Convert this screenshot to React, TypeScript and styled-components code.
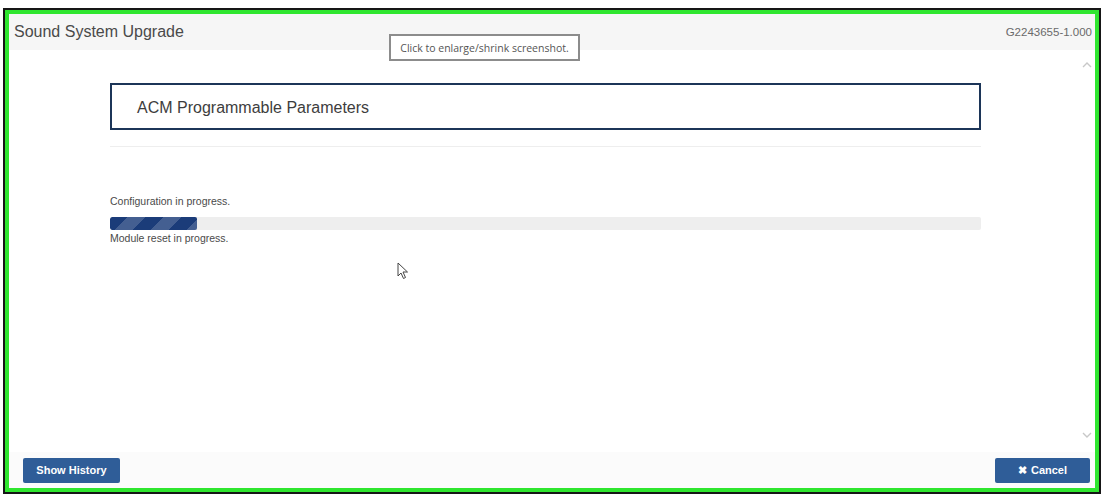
import styled, { createGlobalStyle } from "styled-components";

const GlobalStyle = createGlobalStyle`
  html, body {
    margin: 0;
    padding: 0;
    background: #ffffff;
  }
  body {
    font-family: "Liberation Sans", Arial, sans-serif;
  }
`;

const Page = styled.div`
  width: 1105px;
  height: 498px;
  padding: 8px 0 0 3px;
  box-sizing: border-box;
`;

const Frame = styled.div`
  width: 1098px;
  height: 486px;
  box-sizing: border-box;
  border: 2px solid #161616;
`;

const Screen = styled.div`
  position: relative;
  height: 100%;
  box-sizing: border-box;
  border: 4px solid #2fe62f;
  display: flex;
  flex-direction: column;
  background: #ffffff;
`;

const TopBar = styled.header`
  height: 36px;
  flex: none;
  display: flex;
  align-items: center;
  justify-content: space-between;
  padding: 0 3px 0 5px;
  background: #f6f6f6;
`;

const AppTitle = styled.h1`
  margin: 0;
  font-size: 16px;
  font-weight: normal;
  color: #4a4a4a;
`;

const Version = styled.span`
  font-size: 11.5px;
  color: #6a6a6a;
`;

const Body = styled.main`
  flex: 1;
  display: flex;
  min-height: 0;
`;

const Content = styled.section`
  flex: 1;
  padding: 33px 0 0 101px;
`;

const Wizard = styled.div`
  width: 871px;
`;

const StepHeader = styled.div`
  height: 47px;
  box-sizing: border-box;
  border: 2px solid #1c3558;
  display: flex;
  align-items: center;
  padding: 3px 0 0 25px;
  font-size: 16px;
  color: #3d3d3d;
`;

const Divider = styled.hr`
  margin: 16px 0 0;
  border: 0;
  border-top: 1px solid #eeeeee;
`;

const Status = styled.p<{ $top?: number }>`
  margin: ${(p) => p.$top ?? 0}px 0 0;
  font-size: 10.5px;
  line-height: 14px;
  color: #4a4a4a;
`;

const Track = styled.div`
  margin-top: 9px;
  height: 13px;
  background: #eeeeee;
  border-radius: 2px;
  overflow: hidden;
`;

const Fill = styled.div`
  height: 100%;
  border-radius: 2px;
  background-color: #1b3c79;
  background-image: linear-gradient(
    -45deg,
    rgba(255, 255, 255, 0.18) 25%,
    transparent 25%,
    transparent 50%,
    rgba(255, 255, 255, 0.18) 50%,
    rgba(255, 255, 255, 0.18) 75%,
    transparent 75%,
    transparent
  );
  background-size: 36px 36px;
`;

const ScrollRail = styled.div`
  width: 16px;
  flex: none;
  display: flex;
  flex-direction: column;
  justify-content: space-between;
  align-items: center;
  padding: 12px 0 14px;
  color: #c8c8c8;
`;

const Footer = styled.footer`
  height: 36px;
  flex: none;
  display: flex;
  align-items: center;
  justify-content: space-between;
  padding: 0 5px 0 14px;
  background: #fbfbfb;
`;

const Button = styled.button<{ $width: number }>`
  width: ${(p) => p.$width}px;
  height: 25px;
  border: 0;
  border-radius: 2px;
  background: #2f5d98;
  color: #ffffff;
  font-family: "Liberation Sans", Arial, sans-serif;
  font-size: 11px;
  font-weight: bold;
  display: flex;
  align-items: center;
  justify-content: center;
  gap: 4px;
  cursor: pointer;
`;

const Tooltip = styled.div`
  position: absolute;
  left: 380px;
  top: 20px;
  width: 191px;
  height: 27px;
  box-sizing: border-box;
  border: 2px solid #8c8c8c;
  background: #ffffff;
  display: flex;
  align-items: center;
  justify-content: center;
  font-family: "Open Sans", "Noto Sans", sans-serif;
  font-size: 10.5px;
  color: #555555;
`;

const Cursor = styled.svg`
  position: absolute;
  left: 388px;
  top: 248px;
`;

const Chevron = ({ up }: { up?: boolean }) => (
  <svg width="10" height="6" viewBox="0 0 10 6">
    <path
      d={up ? "M1 5 L5 1 L9 5" : "M1 1 L5 5 L9 1"}
      fill="none"
      stroke="currentColor"
      strokeWidth="1.4"
    />
  </svg>
);

export default function App() {
  const progress = 10;
  return (
    <Page>
      <GlobalStyle />
      <Frame>
        <Screen>
          <TopBar>
            <AppTitle>Sound System Upgrade</AppTitle>
            <Version>G2243655-1.000</Version>
          </TopBar>
          <Body>
            <Content>
              <Wizard>
                <StepHeader>ACM Programmable Parameters</StepHeader>
                <Divider />
                <Status $top={47}>Configuration in progress.</Status>
                <Track>
                  <Fill style={{ width: `${progress}%` }} />
                </Track>
                <Status $top={1}>Module reset in progress.</Status>
              </Wizard>
            </Content>
            <ScrollRail>
              <Chevron up />
              <Chevron />
            </ScrollRail>
          </Body>
          <Footer>
            <Button $width={97}>Show History</Button>
            <Button $width={95}>
              <span>✖</span>
              <span>Cancel</span>
            </Button>
          </Footer>
          <Tooltip>Click to enlarge/shrink screenshot.</Tooltip>
          <Cursor width="12" height="18" viewBox="0 0 12 18">
            <path
              d="M1 1 L1 14 L4 11 L6.5 16.5 L8.5 15.5 L6 10 L10.5 10 Z"
              fill="#ffffff"
              stroke="#444444"
              strokeWidth="1"
              strokeLinejoin="round"
            />
          </Cursor>
        </Screen>
      </Frame>
    </Page>
  );
}
